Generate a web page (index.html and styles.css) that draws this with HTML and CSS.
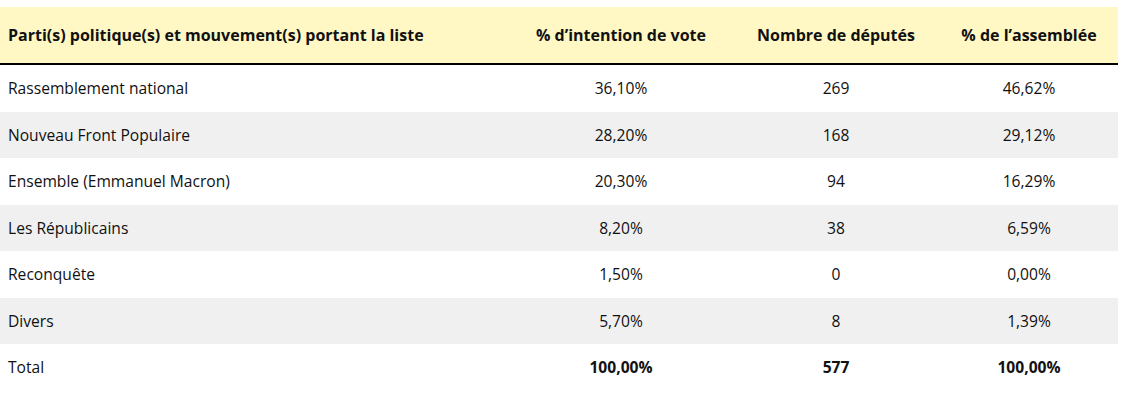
FILE: index.html
```html
<!DOCTYPE html>
<html lang="fr">
<head>
<meta charset="utf-8">
<link rel="stylesheet" href="styles.css">
</head>
<body>
<table class="results">
  <thead>
    <tr>
      <th class="party">Parti(s) politique(s) et mouvement(s) portant la liste</th>
      <th class="c2">% d’intention de vote</th>
      <th class="c3">Nombre de députés</th>
      <th class="c4">% de l’assemblée</th>
    </tr>
  </thead>
  <tbody>
    <tr><td class="party">Rassemblement national</td><td>36,10%</td><td>269</td><td>46,62%</td></tr>
    <tr><td class="party">Nouveau Front Populaire</td><td>28,20%</td><td>168</td><td>29,12%</td></tr>
    <tr><td class="party">Ensemble (Emmanuel Macron)</td><td>20,30%</td><td>94</td><td>16,29%</td></tr>
    <tr><td class="party">Les Républicains</td><td>8,20%</td><td>38</td><td>6,59%</td></tr>
    <tr><td class="party">Reconquête</td><td>1,50%</td><td>0</td><td>0,00%</td></tr>
    <tr><td class="party">Divers</td><td>5,70%</td><td>8</td><td>1,39%</td></tr>
    <tr class="total"><td class="party">Total</td><td><strong>100,00%</strong></td><td><strong>577</strong></td><td><strong>100,00%</strong></td></tr>
  </tbody>
</table>
</body>
</html>
```
FILE: styles.css
```css
html, body {
  margin: 0;
  padding: 0;
  background: #ffffff;
}
body {
  padding-top: 7px;
  font-family: "Open Sans", "Noto Sans", "DejaVu Sans", sans-serif;
  font-size: 15.6px;
  color: #111111;
}
.results {
  width: 1118px;
  border-collapse: collapse;
  table-layout: fixed;
}
.results th {
  background: #fff8c5;
  font-weight: 700;
  font-size: 16px;
  height: 55px;
  padding: 0 8px 1px;
  text-align: center;
  border-bottom: 2px solid #000000;
  white-space: nowrap;
}
.results th.party { width: 494px; text-align: left; }
.results th.c2 { width: 206px; }
.results th.c3 { width: 192px; }
.results td {
  height: 46.5px;
  padding: 0 8px;
  text-align: center;
  white-space: nowrap;
}
.results td.party { text-align: left; }
.results tbody tr:nth-child(even) td { background: #f0f0f0; }
.results strong { font-weight: 700; }
```
